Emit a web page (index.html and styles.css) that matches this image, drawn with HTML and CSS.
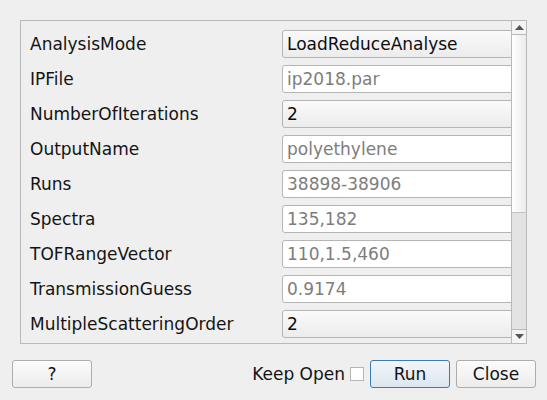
FILE: index.html
```html
<!DOCTYPE html>
<html>
<head>
<meta charset="utf-8">
<link rel="stylesheet" href="styles.css">
</head>
<body>
<div class="dialog">
  <div class="frame">
    <div class="viewport">
      <div class="form">
        <div class="label">AnalysisMode</div><div class="field combo">LoadReduceAnalyse</div>
        <div class="label">IPFile</div><div class="field text">ip2018.par</div>
        <div class="label">NumberOfIterations</div><div class="field combo">2</div>
        <div class="label">OutputName</div><div class="field text">polyethylene</div>
        <div class="label">Runs</div><div class="field text">38898-38906</div>
        <div class="label">Spectra</div><div class="field text">135,182</div>
        <div class="label">TOFRangeVector</div><div class="field text">110,1.5,460</div>
        <div class="label">TransmissionGuess</div><div class="field text">0.9174</div>
        <div class="label">MultipleScatteringOrder</div><div class="field combo">2</div>
      </div>
    </div>
    <div class="scrollbar">
      <div class="arrow up"><svg width="9" height="5" viewBox="0 0 9 5"><path d="M0 5 L4.5 0 L9 5 Z" fill="#555"/></svg></div>
      <div class="handle"></div>
      <div class="groove"></div>
      <div class="arrow down"><svg width="9" height="5" viewBox="0 0 9 5"><path d="M0 0 L4.5 5 L9 0 Z" fill="#555"/></svg></div>
    </div>
  </div>
  <div class="buttons">
    <button class="btn help">?</button>
    <div class="spacer"></div>
    <label class="keep">Keep Open <span class="check"></span></label>
    <button class="btn run">Run</button>
    <button class="btn close">Close</button>
  </div>
</div>
</body>
</html>
```

FILE: styles.css
```css
html, body {
  margin: 0;
  padding: 0;
  background: #efefef;
}
body {
  width: 547px;
  height: 400px;
  overflow: hidden;
  font-family: "DejaVu Sans", sans-serif;
  font-size: 17px;
  color: #141414;
}
.dialog {
  padding: 20px 20px 0 20px;
}
.frame {
  width: 505px;
  height: 322px;
  border: 1px solid #b9b9b9;
  display: flex;
}
.viewport {
  width: 491px;
  height: 322px;
  overflow: hidden;
}
.form {
  display: grid;
  grid-template-columns: 252px 240px;
  row-gap: 7px;
  padding: 9px 0 0 9px;
}
.label {
  height: 28px;
  line-height: 28px;
  white-space: nowrap;
}
.field {
  box-sizing: border-box;
  height: 28px;
  line-height: 26px;
  border: 1px solid #b5b5b5;
  border-radius: 3px;
  padding-left: 4px;
  white-space: nowrap;
}
.field.combo {
  background: linear-gradient(#fafafa, #ececec);
  color: #0e0e0e;
}
.field.text {
  background: #ffffff;
  color: #7d7d7d;
}
.scrollbar {
  width: 14px;
  border-left: 1px solid #b9b9b9;
  display: flex;
  flex-direction: column;
  background: #e3e3e3;
}
.arrow {
  height: 13px;
  background: #f4f4f4;
  display: flex;
  align-items: center;
  justify-content: center;
}
.arrow.up { border-bottom: 1px solid #b9b9b9; }
.arrow.down { border-top: 1px solid #b9b9b9; }
.handle {
  height: 177px;
  background: linear-gradient(to right, #ffffff, #ebebeb);
  border-bottom: 1px solid #c4c4c4;
}
.groove {
  flex: 1;
}
.buttons {
  display: flex;
  align-items: center;
  margin-top: 16px;
  margin-left: -8px;
  margin-right: -9px;
}
.spacer { flex: 1; }
.btn {
  box-sizing: border-box;
  height: 28px;
  width: 80px;
  font-family: "DejaVu Sans", sans-serif;
  font-size: 17px;
  color: #141414;
  border: 1px solid #adadad;
  border-radius: 3px;
  background: linear-gradient(#fbfbfb, #ececec);
  padding: 0;
}
.btn.run {
  border-color: #3b7bb5;
  background: linear-gradient(#f2f6fa, #dde6ee);
  margin-left: 6px;
  margin-right: 6px;
}
.keep {
  display: flex;
  align-items: center;
  gap: 5px;
  white-space: nowrap;
}
.check {
  box-sizing: border-box;
  width: 14px;
  height: 14px;
  border: 1px solid #b5b5b5;
  background: #fff;
  display: inline-block;
}
```
